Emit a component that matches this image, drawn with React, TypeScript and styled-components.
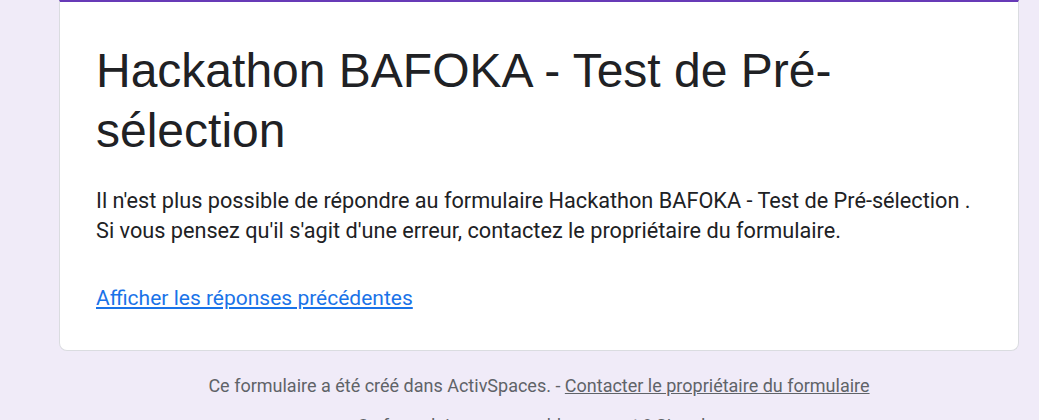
import React from "react";
import styled, { createGlobalStyle } from "styled-components";

const Global = createGlobalStyle`
  html, body { margin: 0; padding: 0; background: #f0ebf8; }
  body { overflow: hidden; }
`;

const Page = styled.div`
  width: 1039px;
  height: 420px;
  overflow: hidden;
  background: #f0ebf8;
  padding-left: 59px;
  box-sizing: border-box;
`;

const Column = styled.div`
  width: 960px;
  display: flex;
  flex-direction: column;
`;

const Card = styled.div`
  background: #fff;
  border: 1px solid #dadce0;
  border-top: 2px solid #673ab7;
  border-radius: 0 0 8px 8px;
  padding: 39px 36px 37px 36px;
  display: flex;
  flex-direction: column;
`;

const Title = styled.h1`
  margin: 0;
  font-family: "Liberation Sans", Arial, sans-serif;
  font-weight: 400;
  font-size: 48px;
  line-height: 60px;
  color: #202124;
`;

const Message = styled.p`
  margin: 25px 0 0 0;
  font-family: Roboto, "Liberation Sans", sans-serif;
  font-size: 21.7px;
  line-height: 30px;
  color: #202124;
`;

const Link = styled.a`
  margin-top: 37px;
  font-family: Roboto, "Liberation Sans", sans-serif;
  font-size: 21px;
  line-height: 30px;
  color: #1a73e8;
  text-decoration: underline;
  align-self: flex-start;
`;

const Footer = styled.div`
  display: flex;
  flex-direction: column;
  align-items: center;
  gap: 16px;
  padding-top: 23px;
  font-family: Roboto, "Liberation Sans", sans-serif;
  font-size: 18px;
  line-height: 24px;
  color: #5f6368;
`;

const FooterLine = styled.div``;

const FooterLink = styled.a`
  color: #5f6368;
  text-decoration: underline;
`;

export default function App() {
  return (
    <>
      <Global />
      <Page>
        <Column>
          <Card>
            <Title>Hackathon BAFOKA - Test de Pré-sélection</Title>
            <Message>
              Il n'est plus possible de répondre au formulaire Hackathon BAFOKA - Test de Pré-sélection .
              <br />
              Si vous pensez qu'il s'agit d'une erreur, contactez le propriétaire du formulaire.
            </Message>
            <Link href="#">Afficher les réponses précédentes</Link>
          </Card>
          <Footer>
            <FooterLine>
              Ce formulaire a été créé dans ActivSpaces. - <FooterLink href="#">Contacter le propriétaire du formulaire</FooterLink>
            </FooterLine>
            <FooterLine>Ce formulaire vous semble suspect ? Signaler</FooterLine>
          </Footer>
        </Column>
      </Page>
    </>
  );
}
